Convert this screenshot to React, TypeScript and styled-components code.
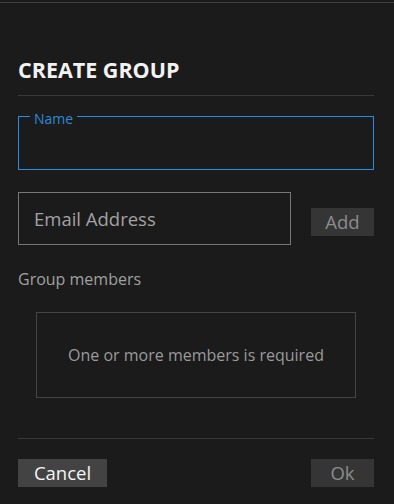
import React from "react";
import styled, { createGlobalStyle } from "styled-components";

const GlobalStyle = createGlobalStyle`
  html, body {
    margin: 0;
    padding: 0;
    background: #1b1b1b;
  }

  body {
    font-family: 'Open Sans', 'Noto Sans', 'Liberation Sans', sans-serif;
    width: 394px;
    height: 504px;
    overflow: hidden;
  }
`;

const TopRule = styled.div`
  margin-top: 2px;
  height: 1px;
  background: #3f3f3f;
`;

const Dialog = styled.div`
  display: flex;
  flex-direction: column;
  padding: 0 20px 0 18px;
`;

const Title = styled.h1`
  margin: 52px 0 0;
  font-size: 21.5px;
  line-height: 30px;
  font-weight: 700;
  color: #f2f2f2;
`;

const Divider = styled.hr<{ gap?: number; }>`
  margin: ${props => props.gap ?? 0}px 0 0;
  border: none;
  height: 1px;
  background: #383838;
`;

const NameField = styled.fieldset`
  margin: 10px 0 0;
  padding: 0 11px;
  height: 64px;
  box-sizing: border-box;
  border: 1px solid #1e8ee6;
`;

const NameLegend = styled.legend`
  padding: 6px 4px 0;
  font-size: 14px;
  line-height: 14px;
  color: #2a8ad8;
`;

const EmailRow = styled.div`
  display: flex;
  flex-direction: row;
  align-items: flex-start;
  justify-content: space-between;
  margin-top: 22px;
`;

const EmailInput = styled.input`
  width: 273px;
  height: 53px;
  box-sizing: border-box;
  margin: 0;
  padding: 0 15px;
  background: transparent;
  border: 1px solid #777;
  border-radius: 0;
  outline: none;
  font-family: inherit;
  font-size: 18.5px;
  color: #ddd;

  &::placeholder {
    color: #a2a2a2;
    opacity: 1;
  }
`;

const Button = styled.button<{ primary?: boolean; }>`
  height: 28px;
  box-sizing: border-box;
  margin: 0;
  padding: 0;
  border: none;
  border-radius: 0;
  font-family: inherit;
  font-size: 18.5px;
  line-height: 28px;
  background: ${props => props.primary ? '#434343' : '#353535'};
  color: ${props => props.primary ? '#f4f4f4' : '#8c8c8c'};
`;

const AddButton = styled(Button)`
  width: 63px;
  margin-top: 16px;
`;

const SectionLabel = styled.div`
  margin-top: 24px;
  font-size: 16px;
  line-height: 20px;
  color: #a0a0a0;
`;

const MembersBox = styled.div`
  display: flex;
  align-items: center;
  justify-content: center;
  margin: 23px 18px 0;
  height: 86px;
  box-sizing: border-box;
  border: 1px solid #454545;
  font-size: 16px;
  color: #9a9a9a;
`;

const Footer = styled.div`
  display: flex;
  flex-direction: row;
  justify-content: space-between;
  margin-top: 20px;
`;

const CancelButton = styled(Button)`
  width: 89px;
`;

const OkButton = styled(Button)`
  width: 63px;
`;

const App: React.FC = () => {
  return (
    <React.Fragment>
      <GlobalStyle />
      <TopRule />
      <Dialog>
        <Title>CREATE GROUP</Title>
        <Divider gap={10} />
        <NameField>
          <NameLegend>Name</NameLegend>
        </NameField>
        <EmailRow>
          <EmailInput placeholder="Email Address" />
          <AddButton>Add</AddButton>
        </EmailRow>
        <SectionLabel>Group members</SectionLabel>
        <MembersBox>One or more members is required</MembersBox>
        <Divider gap={40} />
        <Footer>
          <CancelButton primary>Cancel</CancelButton>
          <OkButton>Ok</OkButton>
        </Footer>
      </Dialog>
    </React.Fragment>
  );
};

export default App;
